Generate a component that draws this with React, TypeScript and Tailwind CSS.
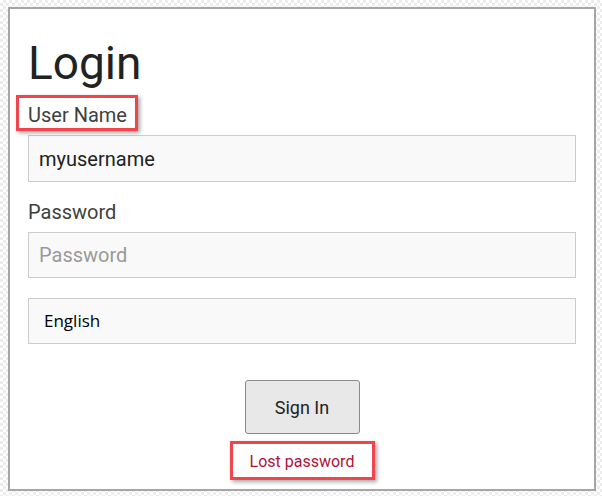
import React from "react";

export default function App() {
  return (
    <div
      className="min-h-[496px] w-[602px] pt-[7px] pl-[8px] bg-[repeating-conic-gradient(#ececec_0_25%,#ffffff_0_50%)] bg-[length:6px_6px]"
      style={{ fontFamily: "Roboto, 'Liberation Sans', sans-serif" }}
    >
      <div className="w-[588px] h-[484px] border-2 border-[#a6a6a6] bg-white px-[18px] flex flex-col">
        <h1 className="mt-[28px] text-[46px] leading-[52px] text-[#222] font-normal">Login</h1>

        <div className="mt-[14px] h-[24px]">
          <span className="relative inline-block text-[20px] leading-[24px] text-[#404040]">
            User Name
            <span className="absolute left-[-12px] top-[-8px] w-[122px] h-[36px] border-[3px] border-[#f0454b] shadow-[2px_2px_4px_rgba(0,0,0,0.35)]" />
          </span>
        </div>

        <input
          readOnly
          value="myusername"
          className="mt-[8px] h-[47px] w-full border border-[#cccccc] bg-[#f9f9f9] pl-[10px] text-[20px] text-[#222] outline-none"
          style={{ fontFamily: "Roboto, sans-serif" }}
        />

        <div className="mt-[18px] h-[24px] text-[20px] leading-[24px] text-[#404040]">Password</div>

        <input
          readOnly
          placeholder="Password"
          className="mt-[8px] h-[46px] w-full border border-[#cccccc] bg-[#f9f9f9] pl-[10px] text-[20px] text-[#222] placeholder:text-[#999] outline-none"
          style={{ fontFamily: "Roboto, sans-serif" }}
        />

        <div
          className="mt-[20px] h-[46px] w-full border border-[#cccccc] bg-[#f9f9f9] pl-[15px] flex items-center text-[17px] text-black"
          style={{ fontFamily: "'Open Sans', 'Noto Sans', sans-serif" }}
        >
          English
        </div>

        <div className="mt-[36px] flex justify-center">
          <button className="h-[54px] w-[115px] rounded-[3px] border border-[#8a8a8a] bg-[#e8e8e8] text-[18px] text-[#222]">
            Sign In
          </button>
        </div>

        <div className="mt-[18px] flex justify-center">
          <span className="relative inline-block text-[16px] leading-[20px] text-[#b0123a]">
            Lost password
            <span className="absolute left-[-20px] right-[-21px] top-[-11px] bottom-[-8px] border-[3px] border-[#f0454b] shadow-[2px_2px_4px_rgba(0,0,0,0.35)]" />
          </span>
        </div>
      </div>
    </div>
  );
}
